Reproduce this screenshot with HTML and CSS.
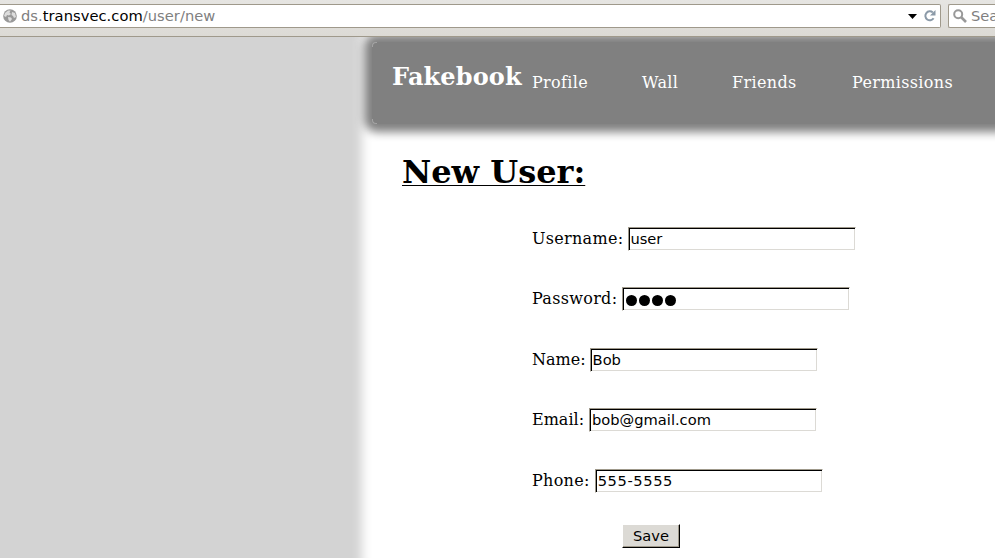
FILE: index.html
```html
<!DOCTYPE html>
<html lang="en">
<head>
<meta charset="utf-8">
<title>New User</title>
<link rel="stylesheet" href="styles.css">
</head>
<body>
<div class="toolbar">
  <div class="address">
    <svg class="globe" width="14" height="14" viewBox="0 0 14 14"><circle cx="7" cy="7" r="6.8" fill="#999"/><path d="M2 4L5 1.5L7.5 1.5L6.5 3.5L8 5L6 6.5L4 6L3 8L1 7ZM9 3L12 4L13 8L11 9L10 7L8.5 6ZM5 8L8 8.5L9 10L7 12.8L5.5 11Z" fill="#ddd"/></svg>
    <span class="url">ds.<b>transvec.com</b>/user/new</span>
    <svg class="caret" width="9" height="5" viewBox="0 0 9 5"><path d="M0 0H9L4.5 5Z" fill="#000"/></svg>
    <svg class="reload" width="12" height="12" viewBox="0 0 12 12"><path d="M9.6 8.3A4.5 4.5 0 1 1 8.8 2.4" fill="none" stroke="#8b9aa8" stroke-width="2"/><path d="M11.5 0V5.5H6Z" fill="#8b9aa8"/></svg>
  </div>
  <div class="search">
    <svg width="14" height="14" viewBox="0 0 14 14"><circle cx="5.2" cy="5.2" r="4" fill="none" stroke="#999" stroke-width="2"/><path d="M8 8L13 13" stroke="#999" stroke-width="2.6"/></svg>
    <span>Sea</span>
  </div>
</div>
<div class="viewport">
  <div class="page">
    <header class="header">
      <span class="brand">Fakebook</span>
      <nav class="nav"><a>Profile</a><a>Wall</a><a>Friends</a><a>Permissions</a></nav>
    </header>
    <h1 class="title">New User:</h1>
    <form class="form">
      <label class="row"><span class="wide">Username:</span> <input type="text" value="user"></label>
      <label class="row"><span class="wide">Password:</span> <span class="secret"><i></i><i></i><i></i><i></i></span></label>
      <label class="row"><span class="name">Name:</span> <input class="inset" type="text" value="Bob"></label>
      <label class="row"><span>Email:</span> <input class="inset" type="text" value="bob@gmail.com"></label>
      <label class="row"><span class="wide">Phone:</span> <input class="inset phone" type="text" value="555-5555"></label>
      <button class="save" type="button">Save</button>
    </form>
  </div>
</div>
</body>
</html>
```
FILE: styles.css
```css
* { box-sizing: border-box; }
body {
  margin: 0;
  width: 995px;
  height: 558px;
  overflow: hidden;
  background: #d3d3d3;
  font: 16px "DejaVu Serif", serif;
  color: #000;
}
.toolbar {
  display: flex;
  gap: 7px;
  height: 37px;
  padding-top: 4px;
  background: linear-gradient(#e6e5e2, #dcdad5);
  border-bottom: 1px solid #9f998b;
  font: 14.67px "DejaVu Sans", sans-serif;
  color: #808080;
}
.address, .search {
  display: flex;
  align-items: center;
  height: 24px;
  background: #fff;
  border: 1px solid #9f998b;
  white-space: nowrap;
}
.address {
  width: 941px;
  flex: none;
  border-left: 0;
  border-radius: 0 2px 2px 0;
  padding: 0 4px 0 3px;
}
.globe { margin-right: 4px; }
.url { flex: 1; padding-bottom: 2px; letter-spacing: 0.05px; }
.url b { font-weight: normal; color: #000; }
.reload { margin-left: 7px; }
.search {
  flex: 1;
  min-width: 0;
  border-right: 0;
  border-radius: 2px 0 0 2px;
  padding-left: 4px;
  gap: 4px;
  overflow: hidden;
}
.search svg { flex: none; }
.search span { padding-bottom: 1px; }
.viewport {
  height: 521px;
  overflow: hidden;
  padding: 5px 0 0 372px;
}
.page {
  width: 623px;
  height: 516px;
  background: #fff;
  box-shadow: 0 0 10px 10px #fff;
}
.header {
  position: relative;
  display: flex;
  height: 82px;
  margin-right: -20px;
  padding-left: 20px;
  background: #808080;
  border-radius: 5px;
  box-shadow: 0 0 10px 8px #808080;
  color: #fff;
}
/* faint highlights on the rounded left corners */
.header::before, .header::after {
  content: "";
  position: absolute;
  left: 0;
  width: 4px;
  height: 4px;
  border-left: 1px solid #a4a4a4;
}
.header::before { top: 0; border-top: 1px solid #a4a4a4; border-top-left-radius: 4px; }
.header::after { bottom: 0; border-bottom: 1px solid #a4a4a4; border-bottom-left-radius: 4px; }
.brand {
  width: 140px;
  padding-top: 21px;
  font-size: 24px;
  font-weight: bold;
  line-height: 28px;
  letter-spacing: 0.15px;
}
.nav {
  display: grid;
  grid-template-columns: 110px 90px 120px 110px;
  padding-top: 31px;
  line-height: 20px;
  letter-spacing: 0.35px;
}
.title {
  margin: 29px 0 0 30px;
  font-size: 32px;
  line-height: 38px;
  text-decoration: underline;
  text-decoration-thickness: 1px;
  text-underline-offset: 2px;
}
.form {
  display: flex;
  flex-direction: column;
  align-items: flex-start;
  gap: 36.4px;
  margin: 36px 0 0 160px;
}
.row {
  display: flex;
  align-items: center;
  gap: 5px;
  height: 24px;
  white-space: nowrap;
}
.row > span:first-child { padding-bottom: 1px; }
.wide { letter-spacing: 0.3px; }
.name { margin-right: -1px; }
.row input, .secret {
  width: 228px;
  height: 24px;
  margin: 0;
  padding: 0 1px 1px;
  background: #fff;
  border: 1px solid;
  border-color: #9f998b #fff #fff #9f998b;
  box-shadow: inset 1px 1px #000, inset -1px -1px #dcdad5;
  font: 14.67px "DejaVu Sans", sans-serif;
  color: #000;
}
.row .inset { padding-left: 2px; }
.row .phone { letter-spacing: 0.6px; }
.row .secret {
  display: flex;
  align-items: center;
  gap: 2px;
  padding: 3px 0 0 3px;
}
.secret i { width: 11px; height: 11px; border-radius: 50%; background: #000; }
.save {
  width: 58px;
  height: 24px;
  margin: -5px 0 0 90px;
  padding: 0 0 1px;
  background: #dcdad5;
  border: 1px solid;
  border-color: #fff #000 #000 #fff;
  box-shadow: inset -1px -1px #9f998b;
  font: 14.67px "DejaVu Sans", sans-serif;
  color: #000;
}
```
